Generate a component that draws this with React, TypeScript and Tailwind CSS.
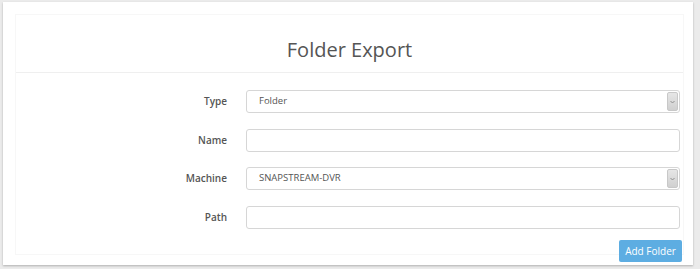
import React from "react";

const font = { fontFamily: '"Open Sans", "Noto Sans", sans-serif' };

function SelectBox({ value }: { value: string }) {
  return (
    <div className="flex h-[23px] w-[434px] items-center rounded-[3px] border border-[#d6d6d6] bg-white pr-[1px]">
      <span className="flex-1 pl-[12px] text-[9.5px] text-[#555]">{value}</span>
      <div className="flex h-[19px] w-[11px] items-center justify-center rounded-[2px] border border-[#c8c8c8] bg-gradient-to-b from-[#e6e6e6] to-[#d0d0d0]">
        <svg width="5" height="4" viewBox="0 0 5 4">
          <path d="M0.5 1 L2.5 3 L4.5 1" stroke="#888" strokeWidth="0.9" fill="none" />
        </svg>
      </div>
    </div>
  );
}

function TextBox() {
  return <div className="h-[23px] w-[434px] rounded-[3px] border border-[#d6d6d6] bg-white" />;
}

function Row({ label, children }: { label: string; children: React.ReactNode }) {
  return (
    <div className="flex items-center">
      <div className="w-[211px] text-right text-[10px] font-semibold text-[#555]">{label}</div>
      <div className="ml-[19px]">{children}</div>
    </div>
  );
}

export default function App() {
  return (
    <div className="h-[269px] w-[700px] bg-[#ebebeb] pl-[3px] pt-[2px]" style={font}>
      <div className="h-[263px] w-[690px] bg-white p-[12px] shadow-[0_1px_2px_rgba(0,0,0,0.25)]">
        <div className="h-[241px] w-[669px] border border-[#f7f7f7]">
          <div className="pt-[20px] text-center text-[20px] leading-[29px] text-[#555]">Folder Export</div>
          <div className="mt-[8px] h-px w-[667px] bg-[#efefef]" />
          <div className="mt-[17px] flex flex-col gap-[15.5px]">
            <Row label="Type">
              <SelectBox value="Folder" />
            </Row>
            <Row label="Name">
              <TextBox />
            </Row>
            <Row label="Machine">
              <SelectBox value="SNAPSTREAM-DVR" />
            </Row>
            <Row label="Path">
              <TextBox />
            </Row>
          </div>
          <div className="mt-[11.5px] flex justify-end pr-[1px]">
            <button className="h-[22px] w-[63px] rounded-[2px] bg-[#5dade2] text-[10px] text-white">Add Folder</button>
          </div>
        </div>
      </div>
    </div>
  );
}
